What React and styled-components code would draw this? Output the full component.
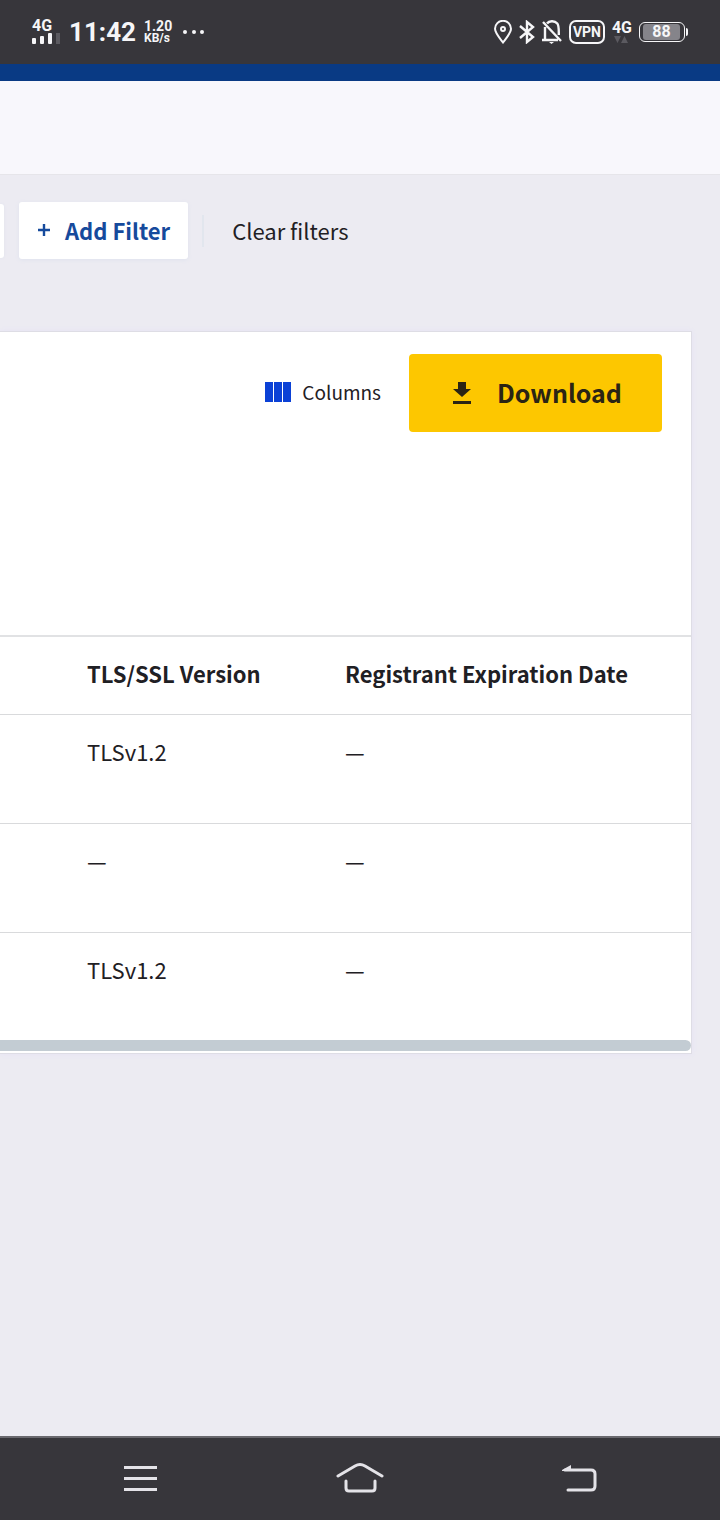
import React from "react";
import styled, { createGlobalStyle } from "styled-components";

const GlobalStyle = createGlobalStyle`
  * {
    box-sizing: border-box;
  }
  body {
    margin: 0;
    background-color: #ecebf2;
    color: #1f2024;
    font-family: "Noto Sans CJK SC", "Open Sans", sans-serif;
    font-size: 22px;
    line-height: 32px;
  }
  button {
    margin: 0;
    padding: 0;
    border: 0;
    background: none;
    color: inherit;
    font: inherit;
    cursor: pointer;
  }
`;
const Page = styled.div`
  display: flex;
  flex-direction: column;
  min-height: 100vh;
  overflow: hidden;
`;
const StatusBar = styled.div`
  display: flex;
  align-items: center;
  justify-content: space-between;
  height: 64px;
  padding: 0 32px;
  background-color: #37363b;
  color: #f6f6f8;
  font-family: Roboto, sans-serif;
  font-weight: 700;
`;
const StatusGroup = styled.div`
  display: flex;
  align-items: center;
  gap: ${(props) => props.$gap}px;
`;
const Network = styled.div`
  display: flex;
  flex-direction: column;
  font-size: 16px;
  line-height: 14px;
`;
const Clock = styled.div`
  font-size: 26px;
  line-height: 32px;
`;
const Rate = styled.div`
  font-size: 14px;
  line-height: 12px;
`;
const RateUnit = styled.div`
  font-size: 12px;
`;
const Vpn = styled.div`
  width: 36px;
  height: 24px;
  border: 2px solid #f6f6f8;
  border-radius: 7px;
  font-size: 14px;
  line-height: 21px;
  text-align: center;
`;
const Battery = styled.div`
  display: flex;
  align-items: center;
`;
const BatteryBody = styled.div`
  width: 46px;
  height: 20px;
  padding: 1px;
  border: 1px solid #f6f6f8;
  border-radius: 6px;
`;
const BatteryLevel = styled.div`
  width: 88%;
  height: 16px;
  margin: 0 2px;
  border-radius: 3px;
  background-color: #85848a;
  font-size: 16px;
  line-height: 16px;
  text-align: center;
`;
const BatteryTip = styled.div`
  width: 2px;
  height: 8px;
  margin-left: 1px;
  border-radius: 0 2px 2px 0;
  background-color: #f6f6f8;
`;
const BrandBar = styled.div`
  height: 17px;
  background-color: #093a84;
`;
const Header = styled.header`
  height: 94px;
  border-bottom: 1px solid #e6e5ea;
  background-color: #f8f7fc;
`;
const Main = styled.main`
  flex: 1;
`;
const Filters = styled.div`
  display: flex;
  align-items: center;
  padding-top: 27px;
`;
const FilterChip = styled.div`
  width: 4px;
  height: 54px;
  margin-right: 15px;
  border-radius: 0 3px 3px 0;
  background-color: #fff;
  box-shadow: 0 0 3px #dfe2ec;
`;
const AddFilter = styled.button`
  display: flex;
  align-items: center;
  gap: 14px;
  height: 57px;
  padding: 0 18px 2px;
  border-radius: 3px;
  background-color: #fff;
  box-shadow: 0 1px 4px #dfe2ee;
  color: #164a9c;
  font-weight: 700;
`;
const Divider = styled.div`
  width: 2px;
  height: 32px;
  margin: 0 28px 0 14px;
  background-color: #e2e6ee;
`;
const ClearButton = styled.button`
  padding-bottom: 2px;
`;
const Card = styled.section`
  margin: 72px 28px 0 0;
  padding-bottom: 2px;
  border: 1px solid #dedde5;
  border-left: 0;
  background-color: #fff;
  box-shadow: 0 0 5px #e5e2f5;
`;
const Toolbar = styled.div`
  display: flex;
  align-items: flex-start;
  justify-content: flex-end;
  gap: 28px;
  height: 303px;
  padding: 22px 29px;
`;
const ColumnsButton = styled.button`
  display: flex;
  align-items: center;
  gap: 11px;
  height: 78px;
  padding-bottom: 2px;
  font-size: 19px;
`;
const DownloadButton = styled.button`
  display: flex;
  align-items: center;
  justify-content: center;
  gap: 26px;
  width: 253px;
  height: 78px;
  padding: 0 0 2px 4px;
  border-radius: 4px;
  background-color: #fdc700;
  color: #2b2414;
  font-size: 25px;
  font-weight: 700;
`;
const Table = styled.table`
  width: 100%;
  border-collapse: collapse;
  table-layout: fixed;
`;
const HeadCell = styled.th`
  width: ${(props) => props.$width};
  height: 78px;
  padding: 0 0 4px;
  border-top: 2px solid #e1e2e4;
  border-bottom: 1px solid #d9dadc;
  font-weight: 700;
  text-align: left;
`;
const Cell = styled.td`
  height: 109px;
  padding: 20px 0 0;
  border-bottom: 1px solid #d9dadc;
  vertical-align: top;
  tr:last-child > & {
    height: 108px;
    border-bottom: 0;
  }
`;
const ScrollTrack = styled.div`
  height: 11px;
  border-radius: 0 6px 6px 0;
  background-color: #c3ccd3;
`;
const NavBar = styled.nav`
  display: flex;
  align-items: center;
  justify-content: space-around;
  height: 84px;
  padding: 0 31px;
  border-top: 2px solid #69686e;
  background-color: #37363b;
`;
const NavButton = styled.button`
  display: flex;
  justify-content: center;
  width: 60px;
`;

const rows = [
  { id: 1, tls: "TLSv1.2", expires: "—" },
  { id: 2, tls: "—", expires: "—" },
  { id: 3, tls: "TLSv1.2", expires: "—" },
];

function SignalIcon() {
  return (
    <svg width="29" height="12" viewBox="0 0 29 12" fill="#f6f6f8">
      <rect x="0" y="5" width="4" height="6" rx="1" />
      <rect x="8" y="3" width="4" height="8" rx="1" />
      <rect x="16" y="0" width="4" height="11" rx="1" />
      <rect x="24" y="0" width="4" height="11" fill="#5b5a60" />
    </svg>
  );
}

function PinIcon() {
  return (
    <svg width="18" height="24" viewBox="0 0 18 24" fill="none" stroke="#f6f6f8" strokeWidth="2">
      <path d="M9 22.5C6 18.5 1 13 1 8.8a8 8 0 0 1 16 0C17 13 12 18.5 9 22.5z" />
      <circle cx="9" cy="9" r="2" />
    </svg>
  );
}

function BluetoothIcon() {
  return (
    <svg width="16" height="24" viewBox="0 0 16 24" fill="none" stroke="#f6f6f8" strokeWidth="2.400">
      <path d="M1 6l13 11-6 5V2l6 5L1 18" />
    </svg>
  );
}

function BellOffIcon() {
  return (
    <svg width="20" height="24" viewBox="0 0 20 24" fill="none" stroke="#f6f6f8" strokeWidth="2.400">
      <path d="M5 3.500C7 .8 12.500.300 15.300 3.500 17 5.500 16.800 8 16.800 15M3 7v12M0 20h16M1 2l18 19" />
      <path d="M7 22h5l-2.500 2z" fill="#f6f6f8" stroke="none" />
    </svg>
  );
}

function DataArrows() {
  return (
    <svg width="17" height="9" viewBox="0 0 17 9" fill="#5b5a60">
      <path d="M2 1h7L5.500 8zM9 8h7l-3.500-7z" />
    </svg>
  );
}

function App() {
  return (
    <Page>
      <GlobalStyle />
      <StatusBar>
        <StatusGroup $gap={8}>
          <Network>
            4G
            <SignalIcon />
          </Network>
          <Clock>11:42</Clock>
          <Rate>
            1.20
            <RateUnit>KB/s</RateUnit>
          </Rate>
          <svg width="28" height="6" viewBox="0 0 28 6" fill="#f6f6f8">
            <circle cx="5" cy="3" r="2" />
            <circle cx="14" cy="3" r="2" />
            <circle cx="22" cy="3" r="2" />
          </svg>
        </StatusGroup>
        <StatusGroup $gap={7}>
          <PinIcon />
          <BluetoothIcon />
          <BellOffIcon />
          <Vpn>VPN</Vpn>
          <Network>
            4G
            <DataArrows />
          </Network>
          <Battery>
            <BatteryBody>
              <BatteryLevel>88</BatteryLevel>
            </BatteryBody>
            <BatteryTip />
          </Battery>
        </StatusGroup>
      </StatusBar>
      <BrandBar />
      <Header />
      <Main>
        <Filters>
          <FilterChip />
          <AddFilter>
            <svg width="14" height="14" viewBox="0 0 14 14" stroke="#164a9c" strokeWidth="2.400">
              <path d="M7 1v12M1 7h12" />
            </svg>
            Add Filter
          </AddFilter>
          <Divider />
          <ClearButton>Clear filters</ClearButton>
        </Filters>
        <Card>
          <Toolbar>
            <ColumnsButton>
              <svg width="26" height="20" viewBox="0 0 26 20" fill="#0b41d6">
                <path d="M0 0h8v20H0zM9 0h8v20H9zM18 0h8v20h-8z" />
              </svg>
              Columns
            </ColumnsButton>
            <DownloadButton>
              <svg width="18" height="24" viewBox="0 0 18 24" fill="#2b2414">
                <path d="M5 2h8v7h5l-9 8-9-8h5zM0 21h18v3H0z" />
              </svg>
              Download
            </DownloadButton>
          </Toolbar>
          <Table>
            <thead>
              <tr>
                <HeadCell as="td" $width="87px" />
                <HeadCell scope="col" $width="258px">TLS/SSL Version</HeadCell>
                <HeadCell scope="col">Registrant Expiration Date</HeadCell>
              </tr>
            </thead>
            <tbody>
              {rows.map((row) => (
                <tr key={row.id}>
                  <Cell />
                  <Cell>{row.tls}</Cell>
                  <Cell>{row.expires}</Cell>
                </tr>
              ))}
            </tbody>
          </Table>
          <ScrollTrack />
        </Card>
      </Main>
      <NavBar>
        <NavButton aria-label="Menu">
          <svg width="34" height="34" viewBox="0 0 34 34" stroke="#e4e3e8" strokeWidth="3">
            <path d="M0 5.500h33M0 16.500h33M0 27.500h33" />
          </svg>
        </NavButton>
        <NavButton aria-label="Home">
          <svg width="48" height="34" viewBox="0 0 48 34" fill="none" stroke="#e4e3e8" strokeWidth="3" strokeLinecap="round">
            <path d="M2 14L19 4q5-3 10 0l17 10M10 19v7q0 3 3 3h23q3 0 3-3v-7" />
          </svg>
        </NavButton>
        <NavButton aria-label="Back">
          <svg width="36" height="34" viewBox="0 0 36 34" fill="none" stroke="#e4e3e8" strokeWidth="3" strokeLinecap="round">
            <path d="M4 8h26q4 0 4 4v12q0 4-4 4H7" />
            <path d="M1 8l9-5v6H1z" fill="#e4e3e8" stroke="none" />
          </svg>
        </NavButton>
      </NavBar>
    </Page>
  );
}

export default App;
